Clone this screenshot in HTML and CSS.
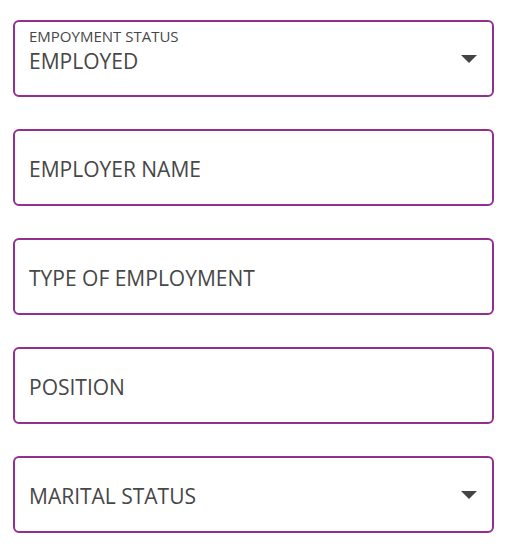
FILE: index.html
```html
<!DOCTYPE html>
<html>
<head>
<meta charset="utf-8">
<link rel="stylesheet" href="styles.css">
</head>
<body>
<div class="form">
  <div class="field select filled">
    <div class="content">
      <span class="label">EMPOYMENT STATUS</span>
      <span class="value">EMPLOYED</span>
    </div>
    <svg class="arrow" width="16" height="8" viewBox="0 0 16 8"><path d="M0 0H16L8 8Z" fill="#444"/></svg>
  </div>
  <div class="field">
    <div class="content"><span class="placeholder">EMPLOYER NAME</span></div>
  </div>
  <div class="field">
    <div class="content"><span class="placeholder">TYPE OF EMPLOYMENT</span></div>
  </div>
  <div class="field">
    <div class="content"><span class="placeholder">POSITION</span></div>
  </div>
  <div class="field select">
    <div class="content"><span class="placeholder">MARITAL STATUS</span></div>
    <svg class="arrow" width="16" height="8" viewBox="0 0 16 8"><path d="M0 0H16L8 8Z" fill="#444"/></svg>
  </div>
</div>
</body>
</html>
```

FILE: styles.css
```css
html, body {
  margin: 0;
  padding: 0;
  background: #fff;
}
body {
  font-family: "Open Sans", "Noto Sans", sans-serif;
  color: #474747;
  font-weight: 400;
}
.form {
  display: flex;
  flex-direction: column;
  gap: 32px;
  padding: 20px 0 0 13px;
}
.field {
  box-sizing: border-box;
  width: 481px;
  height: 77px;
  border: 2px solid #932f8f;
  border-radius: 6px;
  display: flex;
  align-items: center;
  padding: 0 15px 0 14px;
}
.content {
  flex: 1;
  display: flex;
  flex-direction: column;
}
.placeholder {
  font-size: 21px;
  line-height: 26px;
  padding-top: 2px;
}
.filled {
  align-items: flex-start;
}
.filled .content {
  padding-top: 5px;
}
.label {
  font-size: 15px;
  line-height: 19px;
}
.value {
  font-size: 21px;
  line-height: 26px;
  margin-top: 2px;
}
.filled .arrow {
  margin-top: 33px;
}
.arrow {
  flex: none;
}
```
